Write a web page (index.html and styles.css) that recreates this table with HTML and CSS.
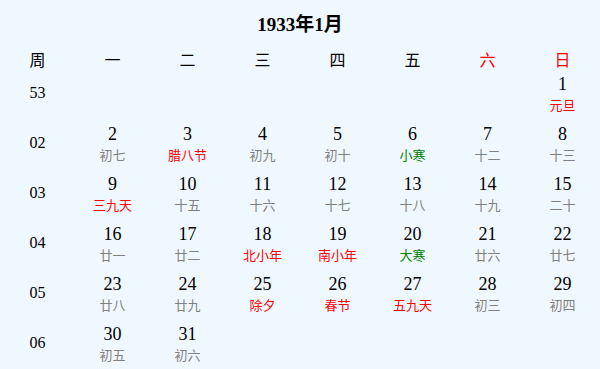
FILE: index.html
```html
<!DOCTYPE html>
<html lang="zh">
<head>
<meta charset="utf-8">
<title>1933年1月</title>
<link rel="stylesheet" href="styles.css">
</head>
<body>
<div class="cal">
  <div class="title">1933年1月</div>
  <div class="grid head">
    <div class="hd">周</div>
    <div class="hd">一</div>
    <div class="hd">二</div>
    <div class="hd">三</div>
    <div class="hd">四</div>
    <div class="hd">五</div>
    <div class="hd we">六</div>
    <div class="hd we">日</div>
  </div>
  <div class="grid row">
    <div class="wk">53</div>
    <div class="day"></div><div class="day"></div><div class="day"></div><div class="day"></div><div class="day"></div><div class="day"></div>
    <div class="day"><span class="num">1</span><span class="lun red">元旦</span></div>
  </div>
  <div class="grid row">
    <div class="wk">02</div>
    <div class="day"><span class="num">2</span><span class="lun">初七</span></div>
    <div class="day"><span class="num">3</span><span class="lun red">腊八节</span></div>
    <div class="day"><span class="num">4</span><span class="lun">初九</span></div>
    <div class="day"><span class="num">5</span><span class="lun">初十</span></div>
    <div class="day"><span class="num">6</span><span class="lun green">小寒</span></div>
    <div class="day"><span class="num">7</span><span class="lun">十二</span></div>
    <div class="day"><span class="num">8</span><span class="lun">十三</span></div>
  </div>
  <div class="grid row">
    <div class="wk">03</div>
    <div class="day"><span class="num">9</span><span class="lun red">三九天</span></div>
    <div class="day"><span class="num">10</span><span class="lun">十五</span></div>
    <div class="day"><span class="num">11</span><span class="lun">十六</span></div>
    <div class="day"><span class="num">12</span><span class="lun">十七</span></div>
    <div class="day"><span class="num">13</span><span class="lun">十八</span></div>
    <div class="day"><span class="num">14</span><span class="lun">十九</span></div>
    <div class="day"><span class="num">15</span><span class="lun">二十</span></div>
  </div>
  <div class="grid row">
    <div class="wk">04</div>
    <div class="day"><span class="num">16</span><span class="lun">廿一</span></div>
    <div class="day"><span class="num">17</span><span class="lun">廿二</span></div>
    <div class="day"><span class="num">18</span><span class="lun red">北小年</span></div>
    <div class="day"><span class="num">19</span><span class="lun red">南小年</span></div>
    <div class="day"><span class="num">20</span><span class="lun green">大寒</span></div>
    <div class="day"><span class="num">21</span><span class="lun">廿六</span></div>
    <div class="day"><span class="num">22</span><span class="lun">廿七</span></div>
  </div>
  <div class="grid row">
    <div class="wk">05</div>
    <div class="day"><span class="num">23</span><span class="lun">廿八</span></div>
    <div class="day"><span class="num">24</span><span class="lun">廿九</span></div>
    <div class="day"><span class="num">25</span><span class="lun red">除夕</span></div>
    <div class="day"><span class="num">26</span><span class="lun red">春节</span></div>
    <div class="day"><span class="num">27</span><span class="lun red">五九天</span></div>
    <div class="day"><span class="num">28</span><span class="lun">初三</span></div>
    <div class="day"><span class="num">29</span><span class="lun">初四</span></div>
  </div>
  <div class="grid row">
    <div class="wk">06</div>
    <div class="day"><span class="num">30</span><span class="lun">初五</span></div>
    <div class="day"><span class="num">31</span><span class="lun">初六</span></div>
    <div class="day"></div><div class="day"></div><div class="day"></div><div class="day"></div><div class="day"></div>
  </div>
</div>
</body>
</html>
```
FILE: styles.css
```css
html, body {
  margin: 0;
  padding: 0;
  background: #f0f8ff;
}
body {
  font-family: "Liberation Serif", "Noto Sans CJK SC", serif;
  color: #000;
  width: 600px;
  height: 369px;
  overflow: hidden;
}
.cal {
  width: 600px;
}
.title {
  height: 42px;
  box-sizing: border-box;
  padding-top: 14px;
  line-height: 22px;
  font-size: 19px;
  font-weight: bold;
  text-align: center;
}
.grid {
  display: grid;
  grid-template-columns: repeat(8, 75px);
}
.head {
  height: 26px;
}
.hd {
  padding-top: 9px;
  line-height: 16px;
  font-size: 16px;
  text-align: center;
  font-family: "Noto Sans CJK SC", sans-serif;
}
.we {
  color: #ff0000;
}
.row {
  height: 50px;
}
.wk {
  display: flex;
  align-items: center;
  justify-content: center;
  font-size: 16px;
}
.day {
  display: flex;
  flex-direction: column;
  align-items: center;
  padding-top: 5px;
}
.num {
  font-size: 18px;
  line-height: 22px;
}
.lun {
  font-family: "Noto Sans CJK SC", sans-serif;
  font-size: 13px;
  line-height: 20px;
  color: #808080;
}
.red {
  color: #ff0000;
}
.green {
  color: #008000;
}
```
